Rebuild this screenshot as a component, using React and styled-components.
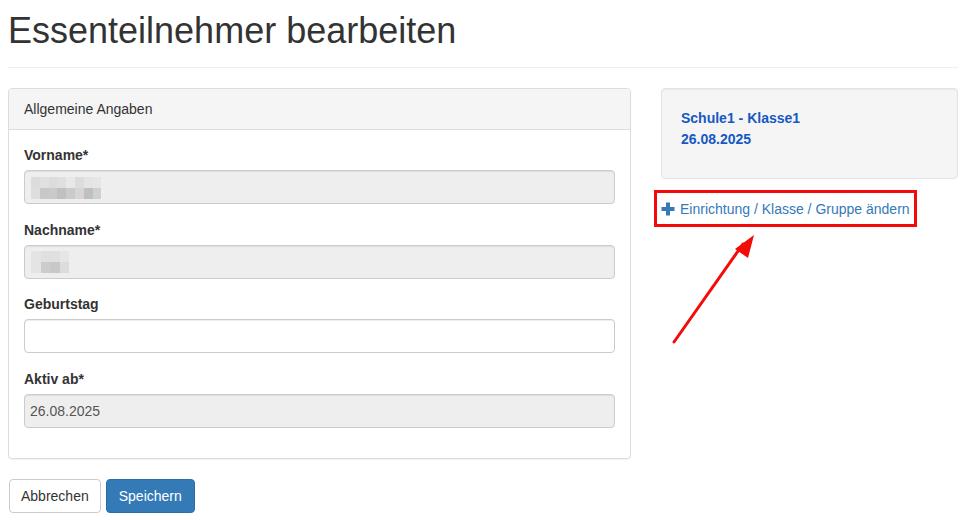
import React from 'react';
import styled, { createGlobalStyle } from 'styled-components';

const GlobalStyle = createGlobalStyle`
  * { box-sizing: border-box; }
  body {
    margin: 0;
    background: #fff;
    color: #333;
    font-family: "Liberation Sans", Arial, sans-serif;
    font-size: 14px;
    line-height: 20px;
  }
`;

const Page = styled.div`
  padding: 0 8px;
  width: 966px;
`;

const PageHeader = styled.div`
  padding: 11px 0 16px;
  border-bottom: 1px solid #eee;
`;

const Title = styled.h1`
  margin: 0;
  font-size: 36px;
  line-height: 40px;
  font-weight: 400;
  color: #333;
`;

const Row = styled.div`
  display: grid;
  grid-template-columns: 623px 297px;
  column-gap: 30px;
  margin-top: 20px;
`;

const Panel = styled.div`
  border: 1px solid #ddd;
  border-radius: 4px;
  background: #fff;
  box-shadow: 0 1px 1px rgba(0, 0, 0, 0.05);
`;

const PanelHeading = styled.div`
  padding: 10px 15px;
  background: #f5f5f5;
  border-bottom: 1px solid #ddd;
  border-radius: 3px 3px 0 0;
  color: #333;
`;

const PanelBody = styled.div`
  padding: 15px 15px 0;
`;

const FormGroup = styled.div`
  margin-bottom: ${(p) => (p.$last ? '30.5px' : '15.5px')};
`;

const Label = styled.label`
  display: block;
  margin-bottom: 5px;
  font-weight: 700;
`;

const Input = styled.div`
  display: flex;
  align-items: center;
  height: 34px;
  padding: 0 5px;
  border: 1px solid #ccc;
  border-radius: 4px;
  background: ${(p) => (p.$disabled ? '#eee' : '#fff')};
  color: #555;
  box-shadow: inset 0 1px 1px rgba(0, 0, 0, 0.075);
`;

const Pixels = styled.div`
  display: grid;
  grid-template-columns: repeat(${(p) => p.$cols}, ${(p) => p.$w}px);
  grid-auto-rows: ${(p) => p.$h}px;
  margin: 1px 0 0 1px;
`;

const Pixel = styled.span`
  background: ${(p) => p.$c};
`;

const Buttons = styled.div`
  display: flex;
  gap: 5px;
  margin: 20px 0 0 1px;
`;

const Button = styled.button`
  height: 34px;
  padding: 6px ${(p) => (p.$primary ? '12px' : '11px')};
  font-family: inherit;
  font-size: 14px;
  line-height: 20px;
  border-radius: 4px;
  border: 1px solid ${(p) => (p.$primary ? '#2e6da4' : '#ccc')};
  background: ${(p) => (p.$primary ? '#337ab7' : '#fff')};
  color: ${(p) => (p.$primary ? '#fff' : '#333')};
`;

const Side = styled.div`
  position: relative;
`;

const Well = styled.div`
  min-height: 91px;
  padding: 19px;
  background: #f5f5f5;
  border: 1px solid #e3e3e3;
  border-radius: 4px;
  box-shadow: inset 0 1px 1px rgba(0, 0, 0, 0.05);
  color: #1559c4;
  font-weight: 700;
  line-height: 21px;
`;

const Action = styled.a`
  position: relative;
  display: inline-flex;
  align-items: center;
  gap: 5px;
  margin-top: 20px;
  color: #337ab7;
  text-decoration: none;

  &::after {
    content: '';
    position: absolute;
    top: -9px;
    left: -7px;
    right: -7px;
    bottom: -8px;
    border: 3px solid #f50a0a;
  }
`;

const Arrow = styled.svg`
  position: absolute;
  left: 8px;
  top: 142px;
`;

const PlusIcon = () => (
  <svg width="14" height="14" viewBox="0 0 14 14">
    <rect x="5" y="0.5" width="4" height="13" fill="#337ab7" />
    <rect x="0.5" y="5" width="13" height="4" fill="#337ab7" />
  </svg>
);

const vorname = [
  ['#dcdcdc', '#e0e0e0', '#dcdcdc', '#dfdfdf', '#e8e8e8', '#dcdcdc', '#e4e4e4', '#e6e6e6'],
  ['#dedede', '#c8c8c8', '#cacaca', '#c0c0c4', '#c9cbcd', '#d8d5d2', '#c0c0c0', '#ccd1d4'],
];

const nachname = [
  ['#e4e4e4', '#e0e0e0', '#e0e0e0', '#e6e6e6'],
  ['#e4e4e4', '#cccccc', '#c8c8c8', '#dcdcdc'],
];

const Blurred = ({ data, w, h }) => (
  <Pixels $cols={data[0].length} $w={w} $h={h}>
    {data.flat().map((c, i) => (
      <Pixel key={i} $c={c} />
    ))}
  </Pixels>
);

const App = () => (
  <Page>
    <GlobalStyle />
    <PageHeader>
      <Title>Essenteilnehmer bearbeiten</Title>
    </PageHeader>

    <Row>
      <div>
        <Panel>
          <PanelHeading>Allgemeine Angaben</PanelHeading>
          <PanelBody>
            <FormGroup>
              <Label>Vorname*</Label>
              <Input $disabled>
                <Blurred data={vorname} w={8.8} h={11} />
              </Input>
            </FormGroup>
            <FormGroup>
              <Label>Nachname*</Label>
              <Input $disabled>
                <Blurred data={nachname} w={9.6} h={11} />
              </Input>
            </FormGroup>
            <FormGroup>
              <Label>Geburtstag</Label>
              <Input />
            </FormGroup>
            <FormGroup $last>
              <Label>Aktiv ab*</Label>
              <Input $disabled>26.08.2025</Input>
            </FormGroup>
          </PanelBody>
        </Panel>
        <Buttons>
          <Button>Abbrechen</Button>
          <Button $primary>Speichern</Button>
        </Buttons>
      </div>

      <Side>
        <Well>
          Schule1 - Klasse1
          <br />
          26.08.2025
        </Well>
        <Action href="#">
          <PlusIcon />
          Einrichtung / Klasse / Gruppe ändern
        </Action>
        <Arrow width="90" height="118" viewBox="0 0 90 118">
          <line x1="5" y1="112" x2="74" y2="14" stroke="#f50a0a" strokeWidth="3" strokeLinecap="round" />
          <polygon points="85,5 79,28 66,19" fill="#f50a0a" />
        </Arrow>
      </Side>
    </Row>
  </Page>
);

export default App;
